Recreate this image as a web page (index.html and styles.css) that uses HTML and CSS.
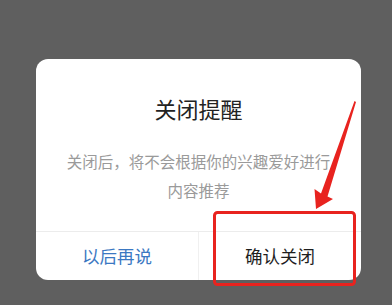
FILE: index.html
```html
<!DOCTYPE html>
<html lang="zh">
<head>
<meta charset="utf-8">
<link rel="stylesheet" href="styles.css">
</head>
<body>
<div class="page">
  <div class="dialog">
    <div class="content">
      <div class="title">关闭提醒</div>
      <div class="message">关闭后，将不会根据你的兴趣爱好进行内容推荐</div>
    </div>
    <div class="actions">
      <div class="btn btn-later">以后再说</div>
      <div class="btn btn-confirm">确认关闭</div>
    </div>
  </div>
  <svg class="annotation" width="392" height="305" viewBox="0 0 392 305" xmlns="http://www.w3.org/2000/svg">
    <rect x="214.5" y="212.5" width="140" height="72" rx="3" fill="none" stroke="#e8231f" stroke-width="3"/>
    <polygon points="354.5,101 356,102 327.5,196.5 333,199 316,209 314.5,189 321,193.5" fill="#e8231f"/>
  </svg>
</div>
</body>
</html>
```

FILE: styles.css
```css
html, body {
  margin: 0;
  padding: 0;
}
body {
  background: #5f5f5f;
  font-family: "Noto Sans CJK SC", "Noto Sans", sans-serif;
  width: 392px;
  height: 305px;
  overflow: hidden;
}
.page {
  position: relative;
  width: 392px;
  height: 305px;
  padding-top: 59px;
  padding-left: 36px;
  box-sizing: border-box;
}
.dialog {
  width: 325px;
  height: 221px;
  background: #fff;
  border-radius: 12px;
  display: flex;
  flex-direction: column;
  overflow: hidden;
}
.content {
  padding: 34px 30px 0;
  height: 173px;
  box-sizing: border-box;
  border-bottom: 1px solid #ececec;
  text-align: center;
}
.title {
  font-size: 22px;
  line-height: 30px;
  color: #222;
}
.message {
  margin-top: 24px;
  font-size: 15.5px;
  line-height: 29px;
  color: #9a9a9a;
}
.actions {
  flex: 1;
  display: flex;
}
.btn {
  flex: 1;
  display: flex;
  align-items: center;
  justify-content: center;
  font-size: 17.5px;
  padding-bottom: 2px;
}
.btn-later {
  color: #3b78c2;
  border-right: 1px solid #f0f0f0;
}
.btn-confirm {
  color: #1e1e1e;
}
.annotation {
  position: absolute;
  left: 0;
  top: 0;
}
```
